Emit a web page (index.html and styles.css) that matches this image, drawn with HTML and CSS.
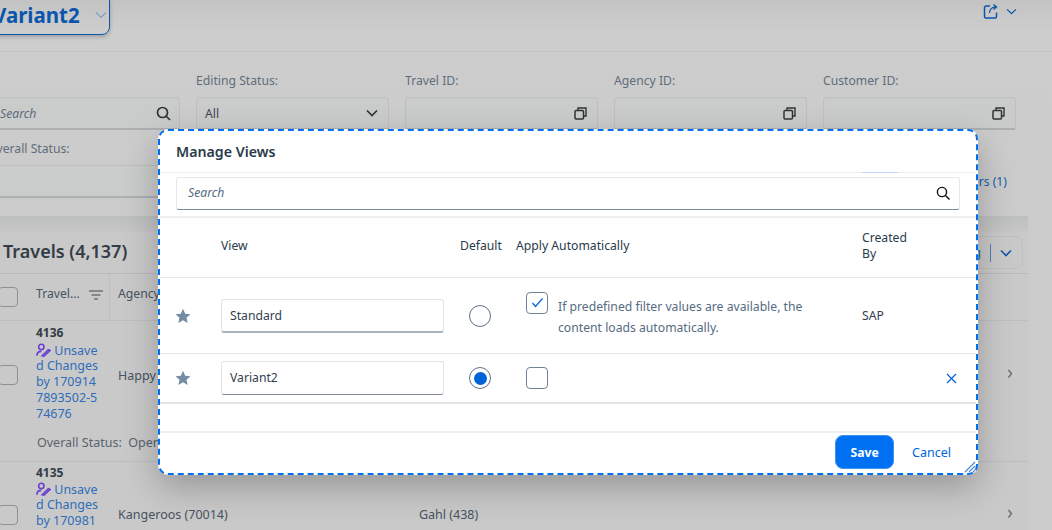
FILE: index.html
```html
<!DOCTYPE html>
<html lang="en">
<head>
<meta charset="utf-8">
<title>Manage Views</title>
<link rel="stylesheet" href="styles.css">
</head>
<body>
<div class="page">
  <header class="top">
    <div class="variant"><span class="variant-name">Variant2</span>
      <svg class="variant-chev" width="12" height="8" viewBox="0 0 12 8"><path d="M1 1.500l5 5 5-5" fill="none" stroke="#7f9fc4" stroke-width="1.200"/></svg>
    </div>
    <div class="share">
      <svg width="17" height="17" viewBox="0 0 17 17"><path d="M7 3H3a1.500 1.500 0 0 0-1.500 1.500v9A1.500 1.500 0 0 0 3 15h9a1.500 1.500 0 0 0 1.500-1.500V9.500" fill="none" stroke="#0a55ad" stroke-width="1.500"/><path d="M6.500 10c0-3.500 2.500-6 6.500-6M10.500 1.500L13.500 4l-3 2.500" fill="none" stroke="#0a55ad" stroke-width="1.300"/></svg>
      <svg width="11" height="7" viewBox="0 0 12 8"><path d="M1 1.500l5 5 5-5" fill="none" stroke="#0a55ad" stroke-width="1.400"/></svg>
    </div>
  </header>
  <section class="filters">
    <div class="filter">
      <label class="flabel">&nbsp;</label>
      <div class="field"><span class="ph">Search</span>
        <svg width="15" height="15" viewBox="0 0 15 15"><circle cx="6.500" cy="6.500" r="5" fill="none" stroke="#333" stroke-width="1.700"/><path d="M10 10l4 4" stroke="#333" stroke-width="1.700"/></svg>
      </div>
    </div>
    <div class="filter">
      <label class="flabel">Editing Status:</label>
      <div class="field wide"><span class="val">All</span>
        <svg width="12" height="8" viewBox="0 0 12 8"><path d="M1 1.500l5 5 5-5" fill="none" stroke="#333" stroke-width="1.700"/></svg>
      </div>
    </div>
    <div class="filter">
      <label class="flabel">Travel ID:</label>
      <div class="field wide"><svg width="13" height="13" viewBox="0 0 13 13"><path d="M4 3V1h8v8h-2.500" fill="none" stroke="#333" stroke-width="1.400"/><rect x="1" y="3.500" width="8.500" height="8.500" rx="1" fill="none" stroke="#333" stroke-width="1.500"/></svg></div>
    </div>
    <div class="filter">
      <label class="flabel">Agency ID:</label>
      <div class="field wide"><svg width="13" height="13" viewBox="0 0 13 13"><path d="M4 3V1h8v8h-2.500" fill="none" stroke="#333" stroke-width="1.400"/><rect x="1" y="3.500" width="8.500" height="8.500" rx="1" fill="none" stroke="#333" stroke-width="1.500"/></svg></div>
    </div>
    <div class="filter">
      <label class="flabel">Customer ID:</label>
      <div class="field wide"><svg width="13" height="13" viewBox="0 0 13 13"><path d="M4 3V1h8v8h-2.500" fill="none" stroke="#333" stroke-width="1.400"/><rect x="1" y="3.500" width="8.500" height="8.500" rx="1" fill="none" stroke="#333" stroke-width="1.500"/></svg></div>
    </div>
    <div class="filter">
      <label class="flabel">Overall Status:</label>
      <div class="field"></div>
    </div>
    <div class="adapt">Adapt Filters (1)</div>
  </section>
  <section class="list">
    <div class="list-head">
      <h2 class="list-title">Travels (4,137)</h2>
      <div class="split"><span class="split-text">Exporting</span><span class="split-sep"></span>
        <svg width="12" height="8" viewBox="0 0 12 8"><path d="M1 1.500l5 5 5-5" fill="none" stroke="#0a55ad" stroke-width="1.600"/></svg>
      </div>
    </div>
    <div class="thead">
      <div class="cell-check"><span class="box"></span></div>
      <div class="cell-travel">Travel...
        <svg width="14" height="10" viewBox="0 0 14 10"><path d="M0 1h14M2.500 5h9M5 9h4" stroke="#444" stroke-width="1.200"/></svg>
      </div>
      <div class="cell-agency">Agency</div>
    </div>
    <div class="trow first">
      <div class="cell-check"><span class="box"></span></div>
      <div class="cell-id"><b class="tid">4136</b>
        <a class="draft"><svg class="draft-ic" width="15" height="15" viewBox="0 0 17 16"><circle cx="6" cy="4" r="3" fill="none" stroke="#6a3fd0" stroke-width="1.800"/><path d="M1 14c0-3.500 2-5 5-5M7 14l7-7 2 1-7 6.500z" fill="none" stroke="#6a3fd0" stroke-width="1.800"/></svg> Unsaved Changes by 1709147893502-574676</a>
      </div>
      <div class="cell-a">Happy</div>
      <div class="chev">›</div>
    </div>
    <div class="status-line">Overall Status:&nbsp; Open</div>
    <div class="trow second">
      <div class="cell-check"><span class="box"></span></div>
      <div class="cell-id"><b class="tid">4135</b>
        <a class="draft"><svg class="draft-ic" width="15" height="15" viewBox="0 0 17 16"><circle cx="6" cy="4" r="3" fill="none" stroke="#6a3fd0" stroke-width="1.800"/><path d="M1 14c0-3.500 2-5 5-5M7 14l7-7 2 1-7 6.500z" fill="none" stroke="#6a3fd0" stroke-width="1.800"/></svg> Unsaved Changes by 1709817893502</a>
      </div>
      <div class="cell-a">Kangeroos (70014)</div>
      <div class="cell-c">Gahl (438)</div>
      <div class="chev">›</div>
    </div>
  </section>
</div>

<div class="dialog">
  <h1 class="dlg-title">Manage Views</h1>
  <span class="dlg-sliver"></span>
  <div class="dlg-search"><span class="dlg-ph">Search</span>
    <svg width="14" height="14" viewBox="0 0 14 14"><circle cx="6" cy="6" r="4.600" fill="none" stroke="#111" stroke-width="1.400"/><path d="M9.500 9.500l4 4" stroke="#111" stroke-width="1.400"/></svg>
  </div>
  <div class="grid ghead">
    <div></div><div>View</div><div>Default</div><div>Apply Automatically</div><div class="created">Created By</div><div></div>
  </div>
  <div class="grid grow1">
    <div class="star-cell"><svg width="16" height="16" viewBox="0 0 16 16"><path d="M8 .8l2.200 4.900 5.300.5-4 3.500 1.200 5.200L8 12.200l-4.700 2.700 1.200-5.200-4-3.500 5.300-.5z" fill="#758ca4"/></svg></div>
    <div><div class="input">Standard</div></div>
    <div><span class="radio"></span></div>
    <div class="apply"><span class="cb"><svg width="13" height="11" viewBox="0 0 13 11"><path d="M1.500 6l3 3.500L11.500 1.500" fill="none" stroke="#0064d9" stroke-width="1.200"/></svg></span>
      <p class="apply-note">If predefined filter values are available, the content loads automatically.</p></div>
    <div class="creator">SAP</div>
    <div></div>
  </div>
  <div class="grid grow2">
    <div class="star-cell"><svg width="16" height="16" viewBox="0 0 16 16"><path d="M8 .8l2.200 4.900 5.300.5-4 3.500 1.200 5.200L8 12.200l-4.700 2.700 1.200-5.200-4-3.500 5.300-.5z" fill="#758ca4"/></svg></div>
    <div><div class="input dark">Variant2</div></div>
    <div><span class="radio on"></span></div>
    <div class="apply"><span class="cb"></span></div>
    <div></div>
    <div class="del"><svg width="11" height="11" viewBox="0 0 11 11"><path d="M1 1l9 9M10 1l-9 9" stroke="#0064d9" stroke-width="1.200"/></svg></div>
  </div>
  <div class="dlg-spacer"></div>
  <footer class="dlg-foot">
    <button class="save">Save</button>
    <button class="cancel">Cancel</button>
    <svg class="grip" width="12" height="12" viewBox="0 0 12 12"><path d="M1 11L11 1M5 11l6-6M9 11l2-2" stroke="#4d86c8" stroke-width="1.100"/></svg>
  </footer>
</div>
</body>
</html>
```
FILE: styles.css
```css
* { box-sizing: border-box; }
html, body { margin: 0; height: 530px; overflow: hidden; }
body { font-family: "Noto Sans", "Open Sans", sans-serif; font-size: 12.200px; color: #32363a; background: #c9c9c9; }
.page { width: 1052px; height: 530px; overflow: hidden; background: linear-gradient(#c3c3c3, #cdcdcd 30px, #cbcbcb 210px); }

.top { height: 52px; display: flex; justify-content: space-between; border-bottom: 1px solid #c3c4c5; }
.variant { margin-left: -26px; width: 136px; height: 36px; margin-top: -1px; border: 1.500px solid #0a55ad; border-radius: 0 0 8px 8px; padding-left: 18px; display: flex; align-items: center; gap: 15px; box-shadow: 0 2px 4px rgba(0,0,0,.22); }
.variant-name { font-size: 20.500px; font-weight: 700; color: #0a55ad; line-height: 28px; margin-top: -5px; }
.variant-chev { margin-top: -5px; }
.share { display: flex; align-items: center; gap: 6px; height: 22px; margin-right: 35px; }

.filters { position: relative; display: grid; grid-template-columns: repeat(5, 193px); gap: 10px 16px; margin-left: -13px; padding-top: 20px; height: 164px; align-content: start; }
.filter { display: flex; flex-direction: column; }
.flabel { height: 25px; line-height: 18px; color: #5f6d7a; }
.field { height: 33px; border: 1px solid #bdbfc0; border-bottom: 2px solid #adb0b3; border-radius: 4px 4px 2px 2px; display: flex; align-items: center; justify-content: flex-end; position: relative; padding: 0 8px; background: #cacbcb; }
.wide { padding-right: 10px; }
.ph { position: absolute; left: 12px; font-style: italic; color: #5f6d7a; }
.val { position: absolute; left: 8px; color: #3c4650; }
.adapt { position: absolute; left: 895px; top: 121px; width: 125px; text-align: right; color: #1a5fa8; }

.list { background: #c9c9c9; width: 1028px; position: relative; }
.list::before { content: ""; display: block; height: 16px; background: linear-gradient(#bdbebf, #c6c6c6); }
.list-head { height: 41px; display: flex; justify-content: space-between; align-items: center; padding-left: 3px; }
.list-title { margin: -4px 0 0; font-size: 18px; font-weight: 600; color: #333c45; }
.split { display: flex; align-items: center; gap: 9px; width: 150px; height: 33px; margin-right: 5px; border: 1px solid #bdbfc0; border-radius: 8px; padding: 0 10px; justify-content: flex-end; color: #1a5fa8; }
.split-sep { width: 1px; height: 18px; background: #4d7fb8; }
.thead { display: flex; height: 48px; border-top: 1px solid #b8babb; border-bottom: 1px solid #bcbebf; }
.cell-check { width: 28px; flex: none; display: flex; align-items: center; position: relative; }
.box { display: block; width: 20px; height: 20px; margin-left: -2px; border: 1px solid #8a9299; border-radius: 4px; }
.cell-travel { width: 82px; flex: none; border-right: 1px solid #bcbebf; display: flex; align-items: flex-start; gap: 9px; padding: 11px 8px 0; color: #475360; }
.cell-travel svg { margin-top: 5px; flex: none; }
.cell-agency { padding: 11px 8px 0; color: #475360; }
.trow { display: flex; align-items: center; position: relative; }
.first { height: 108px; }
.second { height: 106px; border-top: 1px solid #bcbebf; align-self: stretch; }
.status-line { height: 32px; padding-left: 37px; padding-top: 5px; color: #59636e; font-size: 12.500px; }
.cell-id { width: 82px; flex: none; padding-left: 8px; align-self: flex-start; padding-top: 4px; line-height: 15.700px; font-size: 12.500px; }
.second .cell-id { padding-top: 3px; }
.second .tid { margin-bottom: 1px; }
.tid { display: block; color: #333c45; font-weight: 700; font-size: 12px; margin-bottom: 2px; }
.draft { display: block; width: 64px; color: #2f6dba; word-break: break-all; }
.draft-ic { vertical-align: -3px; }
.cell-a { width: 301px; flex: none; padding-left: 8px; color: #475360; font-size: 12.500px; }
.cell-c { color: #475360; font-size: 12.500px; padding-left: 8px; }
.chev { position: absolute; left: 1007px; top: 50%; margin-top: -15px; color: #6b7178; font-size: 19px; line-height: 24px; }

.dialog { position: absolute; left: 158px; top: 129px; width: 820px; height: 346px; background: #fff; border: 2px dashed #0070f2; border-radius: 10px; box-shadow: 0 12px 34px rgba(0,0,0,.25); display: flex; flex-direction: column; }
.dlg-title { margin: 0; height: 42px; padding: 11px 0 0 16px; font-size: 14.200px; line-height: 20px; font-weight: 600; color: #2a3a4b; border-bottom: 1px solid #edeff0; flex: none; }
.dlg-sliver { position: absolute; left: 702px; top: 41px; width: 36px; height: 1px; background: #bcd8f8; }
.dlg-search { flex: none; margin: 4px 16px 0; height: 33px; border: 1px solid #e5e8ea; border-bottom: 1px solid #7e8b98; border-radius: 3px; display: flex; align-items: center; justify-content: space-between; padding: 0 9px 2px 11px; }
.dlg-ph { font-style: italic; color: #556b82; }
.grid { display: grid; grid-template-columns: 61px 239px 56px 346px 78px 1fr; align-items: center; flex: none; border-bottom: 1px solid #e5e8ea; }
.ghead { margin-top: 6px; height: 62px; border-top: 2px solid #edeff0; color: #2a3a4b; padding-bottom: 4px; }
.created { line-height: 16px; padding-right: 20px; }
.grow1 { height: 76px; }
.grow2 { height: 50px; border-bottom: 2px solid #dfe3e6; }
.star-cell { padding-left: 15px; display: flex; }
.input { width: 223px; height: 34px; border: 1px solid #e0e4e8; border-bottom: 2px solid #a9b4be; border-radius: 3px; padding-left: 8px; line-height: 32px; color: #32404e; }
.dark { border-bottom: 1px solid #7e8b98; }
.radio { display: block; width: 22px; height: 22px; margin-left: 9px; border: 1px solid #5b738b; border-radius: 50%; position: relative; }
.on::after { content: ""; position: absolute; left: 3.500px; top: 3.500px; width: 13px; height: 13px; background: #0064d9; border-radius: 50%; }
.apply { display: flex; align-items: flex-start; gap: 10px; padding-left: 10px; }
.cb { flex: none; display: flex; align-items: center; justify-content: center; width: 22px; height: 22px; border: 1px solid #6f8296; border-radius: 4px; }
.apply-note { margin: 4px 0 0; width: 270px; color: #556b82; line-height: 21px; }
.grow1 .apply { margin-top: -2px; }
.creator { color: #32404e; }
.del { padding-left: 6px; display: flex; }
.dlg-spacer { height: 29px; flex: none; border-bottom: 2px solid #edeff0; }
.dlg-foot { flex: 1; display: flex; align-items: flex-start; justify-content: flex-end; gap: 18px; position: relative; padding: 2px 25px 0 0; }
.save { width: 59px; height: 34px; background: #0070f2; color: #fff; border: 1px solid #3d92f5; border-radius: 8px; font: 700 12.200px "Noto Sans", sans-serif; }
.cancel { border: 0; background: none; padding: 0; height: 34px; color: #0064d9; font: 12.500px "Noto Sans", sans-serif; }
.grip { position: absolute; right: 0; bottom: 0; }
```
